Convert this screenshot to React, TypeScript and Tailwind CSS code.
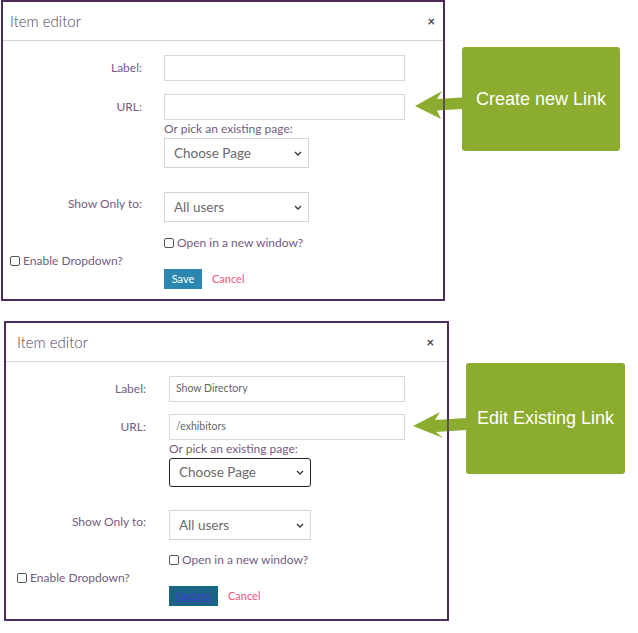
import React from "react";

const lato = { fontFamily: "Lato, 'Open Sans', sans-serif" };

function Chevron() {
  return (
    <svg width="8" height="5" viewBox="0 0 8 5" className="shrink-0">
      <path d="M1 1 L4 4 L7 1" fill="none" stroke="#333" strokeWidth="1.3" />
    </svg>
  );
}

function Check() {
  return <span className="inline-block w-[10px] h-[10px] border border-[#555] rounded-[2px] bg-white shrink-0" />;
}

function Panel({ edit }: { edit: boolean }) {
  const labelCls = "text-[12px] text-[#735c80] text-right shrink-0";
  return (
    <div
      style={lato}
      className={
        edit
          ? "ml-[4px] w-[445px] h-[300px] border-2 border-[#4b2a5c] bg-white flex flex-col shrink-0"
          : "ml-[1px] w-[444px] h-[301px] border-2 border-[#4b2a5c] bg-white flex flex-col shrink-0"
      }
    >
      <div
        className={
          edit
            ? "h-[39px] border-b border-[#d4d4d4] flex items-center justify-between pl-[11px] pr-[13px]"
            : "h-[39px] border-b border-[#d4d4d4] flex items-center justify-between pl-[7px] pr-[8px]"
        }
      >
        <span className="text-[15px] font-light text-[#4f3f5a] leading-none">Item editor</span>
        <span className="text-[13px] font-bold text-[#444] leading-none">×</span>
      </div>
      <div className="flex flex-col pt-[14px]">
        <div className="flex items-center">
          <span className={labelCls + (edit ? " w-[140px] mr-[23px]" : " w-[139px] mr-[22px]")}>Label:</span>
          <div
            className={
              (edit ? "w-[236px]" : "w-[241px]") +
              " h-[26px] border border-[#d9d9d9] bg-white flex items-center pl-[6px] text-[10.5px] text-[#666]"
            }
          >
            {edit ? "Show Directory" : ""}
          </div>
        </div>
        <div className={"flex items-center " + (edit ? "mt-[12px]" : "mt-[13px]")}>
          <span className={labelCls + (edit ? " w-[140px] mr-[23px]" : " w-[139px] mr-[22px]")}>URL:</span>
          <div
            className={
              (edit ? "w-[236px]" : "w-[241px]") +
              " h-[26px] border border-[#d9d9d9] bg-white flex items-center pl-[6px] text-[10.5px] text-[#666]"
            }
          >
            {edit ? "/exhibitors" : ""}
          </div>
        </div>
        <div className={"flex flex-col " + (edit ? "ml-[163px]" : "ml-[161px]")}>
          <span className="h-[17px] leading-[17px] text-[12px] text-[#735c80]">Or pick an existing page:</span>
          <div
            className={
              edit
                ? "mt-[1px] w-[142px] h-[29px] border-[1.5px] border-[#222] rounded-[3px] flex items-center justify-between pl-[9px] pr-[6px] text-[13.5px] text-[#6a6a6a]"
                : "mt-[1px] w-[145px] h-[30px] border border-[#d4d4d4] flex items-center justify-between pl-[9px] pr-[6px] text-[13.5px] text-[#6a6a6a]"
            }
          >
            <span>Choose Page</span>
            <Chevron />
          </div>
        </div>
        <div className={"flex items-start " + (edit ? "mt-[23px]" : "mt-[24px]")}>
          <span
            className={
              labelCls +
              " leading-[16px] pt-[4px]" +
              (edit ? " w-[140px] mr-[23px]" : " w-[139px] mr-[22px]")
            }
          >
            Show Only to:
          </span>
          <div
            className={
              (edit ? "w-[142px]" : "w-[145px]") +
              " h-[30px] border border-[#d4d4d4] flex items-center justify-between pl-[9px] pr-[6px] text-[13.5px] text-[#6a6a6a]"
            }
          >
            <span>All users</span>
            <Chevron />
          </div>
        </div>
        <div
          className={
            "flex items-center gap-[3px] h-[16px] " + (edit ? "mt-[12px] ml-[163px]" : "mt-[13px] ml-[161px]")
          }
        >
          <Check />
          <span className="text-[12px] text-[#735c80] leading-none">Open in a new window?</span>
        </div>
        <div className={"flex items-center gap-[3px] h-[16px] mt-[2px] " + (edit ? "ml-[11px]" : "ml-[7px]")}>
          <Check />
          <span className="text-[12px] text-[#735c80] leading-none">Enable Dropdown?</span>
        </div>
        <div className={"flex items-center " + (edit ? "ml-[163px]" : "ml-[161px]")}>
          {edit ? (
            <span className="w-[49px] h-[20px] bg-[#1b6584] flex items-center justify-center text-[11px] text-[#3b3bd0] underline">
              Update
            </span>
          ) : (
            <span className="w-[38px] h-[20px] bg-[#2b87b0] flex items-center justify-center text-[11px] text-white">
              Save
            </span>
          )}
          <span className="ml-[10px] text-[11px] text-[#f2557a]">Cancel</span>
        </div>
      </div>
    </div>
  );
}

function Callout({ text, cls }: { text: string; cls: string }) {
  return (
    <div
      className={
        "bg-[#8bac2f] rounded-[3px] flex items-center justify-center text-white text-[18px] shrink-0 " + cls
      }
      style={{ fontFamily: "'Liberation Sans', Arial, sans-serif" }}
    >
      {text}
    </div>
  );
}

export default function App() {
  return (
    <div className="w-[638px] h-[633px] bg-white flex flex-col overflow-hidden">
      <div className="relative flex items-start">
        <Panel edit={false} />
        <Callout text="Create new Link" cls="mt-[47px] ml-[17px] w-[158px] h-[104px]" />
        <svg className="absolute left-0 top-0 pointer-events-none" width="638" height="130">
          <polygon points="415,106 442,91 437,99 462,97.5 462,109 437,110.5 441,119" fill="#8bac2f" />
          <rect x="443.3" y="90" width="1.4" height="30" fill="#4b2a5c" />
        </svg>
      </div>
      <div className="relative flex items-start mt-[20px]">
        <Panel edit={true} />
        <Callout text="Edit Existing Link" cls="mt-[42px] ml-[17px] w-[159px] h-[111px]" />
        <svg className="absolute left-0 top-0 pointer-events-none" width="638" height="130">
          <polygon points="413,105 440,91 435,99 466,97 466,109 436,111 443,117" fill="#8bac2f" />
          <rect x="447.3" y="88" width="1.4" height="32" fill="#4b2a5c" />
        </svg>
      </div>
    </div>
  );
}
